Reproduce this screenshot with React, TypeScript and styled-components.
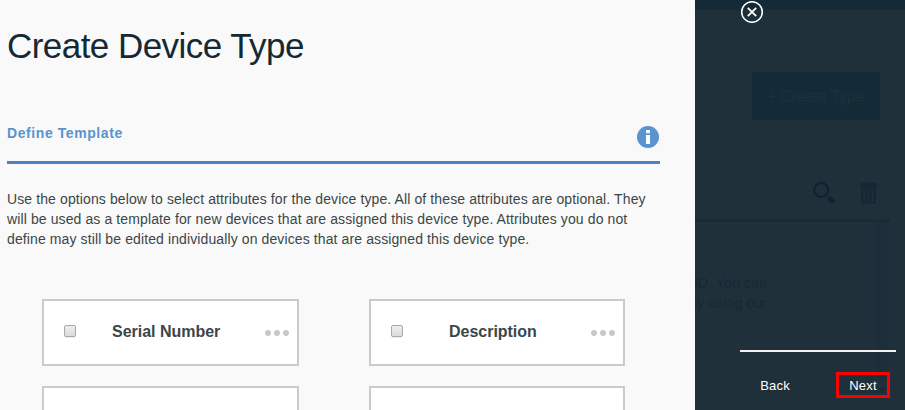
import React from "react";
import styled, { createGlobalStyle } from "styled-components";

const GlobalStyle = createGlobalStyle`
  * { box-sizing: border-box; }
  body { margin: 0; background: #f9f9f9; overflow: hidden; }
  button { font: inherit; }
`;

const Page = styled.div`
  display: flex;
  width: 905px;
  height: 410px;
  overflow: hidden;
  font-family: "Liberation Sans", Arial, sans-serif;
  color: #3c4646;
`;

const Dialog = styled.main`
  width: 695px;
  height: 410px;
  flex: none;
  background: #f9f9f9;
  padding: 26px 35px 0 7px;
  overflow: hidden;
`;

const Title = styled.h1`
  margin: 0;
  height: 98px;
  font-size: 35px;
  line-height: 40px;
  font-weight: 400;
  letter-spacing: -0.55px;
  color: #152935;
  white-space: nowrap;
`;

const SectionHeader = styled.header`
  display: flex;
  justify-content: space-between;
  height: 40px;
  border-bottom: 3px solid #4b82c4;
`;

const SectionTitle = styled.h2`
  margin: 0;
  font-size: 14px;
  line-height: 18px;
  letter-spacing: 0.58px;
  color: #5a93d0;
`;

const InfoIcon = styled.svg`
  margin: 2px 1px 0 0;
`;

const Intro = styled.p`
  margin: 25px 0 0;
  height: 110px;
  font-size: 14px;
  line-height: 20px;
  letter-spacing: 0.11px;
  white-space: pre;
`;

const CardGrid = styled.div`
  display: grid;
  grid-template-columns: 257px 256px;
  grid-auto-rows: 67px;
  column-gap: 70px;
  row-gap: 20px;
  padding-left: 35px;
`;

const Card = styled.section`
  display: grid;
  grid-template-columns: 12px 1fr 24px;
  align-items: center;
  padding: 0 8px 0 20px;
  background: #fff;
  border: 2px solid #cbcbcb;
`;

const Checkbox = styled.span`
  width: 12px;
  height: 12px;
  margin-top: -3px;
  border: 1px solid #a9a9a9;
  border-radius: 2px;
  background: linear-gradient(#ededed, #dcdcdc);
  box-shadow: 0 1px 0 #ececec;
`;

const CardTitle = styled.h3<{ $shift: number }>`
  margin: -2px 0 0;
  padding-left: ${(p) => p.$shift}px;
  font-size: 16px;
  line-height: 20px;
  letter-spacing: -0.02px;
  white-space: nowrap;
`;

const Dots = styled.span`
  display: flex;
  justify-content: space-between;
  margin-top: 1px;
`;

const Dot = styled.i`
  width: 6px;
  height: 6px;
  border-radius: 50%;
  background: #c8c8c8;
`;

const Side = styled.aside`
  position: relative;
  width: 210px;
  height: 410px;
  background: #1f303b;
  overflow: hidden;
`;

const Dimmed = styled.div`
  display: flex;
  flex-direction: column;
  height: 410px;
  color: #162834;
`;

const TopBar = styled.div`
  height: 10px;
  background: #152a37;
`;

const CreateType = styled.div`
  width: 128px;
  height: 48px;
  margin: 62px 0 0 57px;
  padding-left: 15px;
  background: #152a37;
  color: #1f303b;
  font-size: 16px;
  line-height: 49px;
  letter-spacing: -0.28px;
  white-space: nowrap;
`;

const Tools = styled.div`
  display: flex;
  justify-content: flex-end;
  gap: 24px;
  height: 102px;
  width: 195px;
  padding: 62px 13px 0 0;
  border-bottom: 3px solid #192b36;
`;

const Listing = styled.div`
  display: flex;
  justify-content: space-between;
  width: 193px;
  height: 188px;
`;

const ListingText = styled.p`
  margin: 51px 0 0;
  width: 72px;
  display: flex;
  flex-direction: column;
  align-items: flex-end;
  font-size: 14px;
  line-height: 20px;
  letter-spacing: 0.115px;
  white-space: nowrap;
`;

const Scrollbar = styled.div`
  display: flex;
  flex-direction: column;
  justify-content: flex-end;
  align-items: center;
  width: 12px;
  height: 173px;
  background: #1c2e39;
`;

const ScrollArrow = styled.div`
  height: 17px;
  width: 12px;
  background: #1f303b;
`;

const Controls = styled.nav`
  position: absolute;
  inset: 0;
  display: flex;
  flex-direction: column;
  padding: 1px 9px 0 45px;
  color: #fff;
`;

const Close = styled.button`
  display: block;
  width: 24px;
  height: 22px;
  padding: 0;
  border: 0;
  background: none;
  color: inherit;
`;

const Footer = styled.div`
  display: flex;
  justify-content: space-between;
  margin-top: 327px;
  padding: 20px 6px 0 8px;
  border-top: 2px solid #f2f2f2;
`;

const NavButton = styled.button<{ $active?: boolean }>`
  width: 54px;
  height: 26px;
  padding: 1px 0 0;
  border: 3px solid ${(p) => (p.$active ? "#ff0000" : "transparent")};
  background: none;
  color: #fff;
  font-size: 13px;
  line-height: 19px;
  letter-spacing: 0.2px;
  white-space: nowrap;
`;

const attributes = [
  { name: "Serial Number", shift: 36 },
  { name: "Description", shift: 46 },
];

const intro = [
  "Use the options below to select attributes for the device type. All of these attributes are optional. They",
  "will be used as a template for new devices that are assigned this device type. Attributes you do not",
  "define may still be edited individually on devices that are assigned this device type.",
].join("\n");

export default function App() {
  return (
    <Page>
      <GlobalStyle />
      <Dialog>
        <Title>Create Device Type</Title>
        <SectionHeader>
          <SectionTitle>Define Template</SectionTitle>
          <InfoIcon width="22" height="22" viewBox="0 0 22 22">
            <circle cx="11" cy="11" r="11" fill="#5a93d0" />
            <path d="M9 4h4v3.2H9zM9 9h4v9H9z" fill="#fff" />
          </InfoIcon>
        </SectionHeader>
        <Intro>{intro}</Intro>
        <CardGrid>
          {attributes.map((a) => (
            <Card key={a.name}>
              <Checkbox role="checkbox" aria-checked={false} />
              <CardTitle $shift={a.shift}>{a.name}</CardTitle>
              <Dots>
                <Dot />
                <Dot />
                <Dot />
              </Dots>
            </Card>
          ))}
          <Card />
          <Card />
        </CardGrid>
      </Dialog>
      <Side>
        <Dimmed>
          <TopBar />
          <CreateType>+ Create Type</CreateType>
          <Tools>
            <svg width="23" height="23" viewBox="0 0 23 23" fill="none" stroke="#10232f">
              <circle cx="8.2" cy="8" r="7" strokeWidth="2.2" />
              <path d="M15.5 15.5l5.2 5" strokeWidth="4.6" />
            </svg>
            <svg width="17" height="23" viewBox="0 0 17 23" fill="#152834">
              <path
                fillRule="evenodd"
                d="M5 0h7l1 1h4v4h-1v17H1V5H0V1h4zM3.5 8v12H5V8zM7.7 8v12h1.4V8zM12 8v12h1.4V8z"
              />
            </svg>
          </Tools>
          <Listing>
            <ListingText>
              <span>ID. You can</span>
              <span>by using our</span>
            </ListingText>
            <Scrollbar>
              <ScrollArrow>
                <svg width="12" height="17" viewBox="0 0 12 17">
                  <path d="M3 10h7l-3.5 4z" fill="#182935" />
                </svg>
              </ScrollArrow>
            </Scrollbar>
          </Listing>
        </Dimmed>
        <Controls>
          <Close aria-label="Close">
            <svg width="24" height="22" viewBox="0 0 24 22" fill="none" stroke="currentColor">
              <circle cx="12" cy="11" r="10.3" strokeWidth="1.5" />
              <path d="M7.8 6.8l8.4 8.4M16.2 6.8l-8.4 8.4" strokeWidth="1.8" />
            </svg>
          </Close>
          <Footer>
            <NavButton>Back</NavButton>
            <NavButton $active>Next</NavButton>
          </Footer>
        </Controls>
      </Side>
    </Page>
  );
}
